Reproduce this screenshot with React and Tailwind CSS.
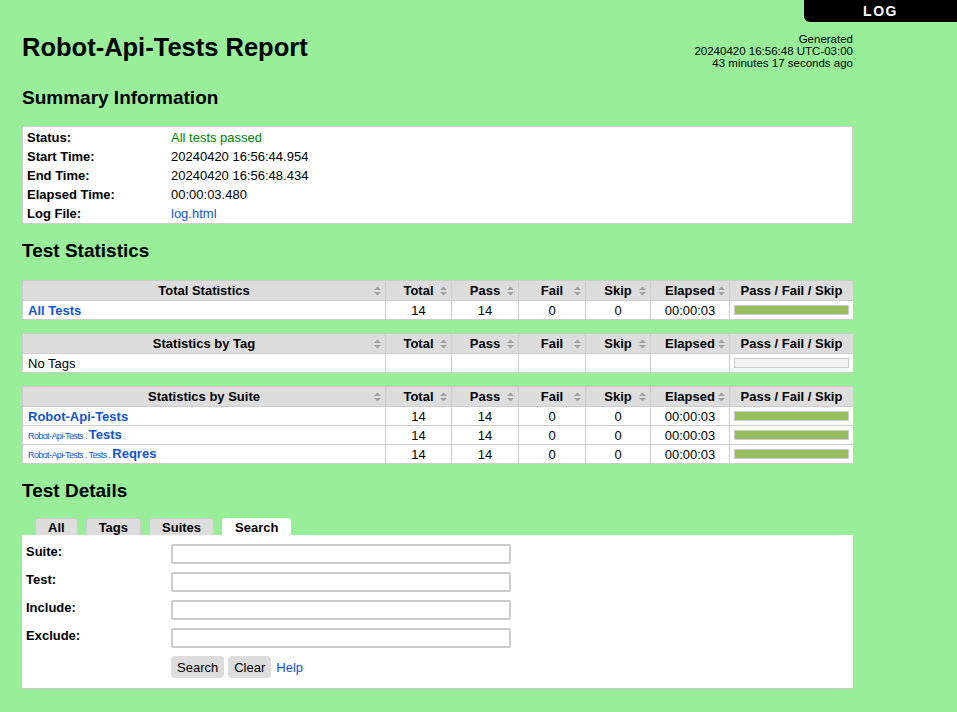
import React from "react";

const font = { fontFamily: '"Liberation Sans", Arial, Helvetica, sans-serif' };

function SortIcon() {
  return (
    <svg
      className="absolute right-[4px] top-1/2 -translate-y-1/2"
      width="7"
      height="9"
      viewBox="0 0 7 9"
    >
      <polygon points="0,3.5 3.5,0 7,3.5" fill="#a0a0a0" />
      <polygon points="0,5.5 3.5,9 7,5.5" fill="#a0a0a0" />
    </svg>
  );
}

const cols = ["Total", "Pass", "Fail", "Skip", "Elapsed"];

function Bar({ empty }) {
  return (
    <div className="px-[4px]">
      <div
        className={`h-[10px] border border-[#ccc] ${
          empty ? "bg-[#f4f4f4]" : "bg-[#97bd61]"
        }`}
      />
    </div>
  );
}

function StatTable({ title, rows }) {
  return (
    <table className="w-full table-fixed border-collapse bg-white text-[13px] leading-[15px]">
      <colgroup>
        <col className="w-[363px]" />
        <col className="w-[66px]" />
        <col className="w-[67px]" />
        <col className="w-[67px]" />
        <col className="w-[65px]" />
        <col className="w-[79px]" />
        <col className="w-[124px]" />
      </colgroup>
      <thead>
        <tr className="h-[20px] bg-[#ddd]">
          <th className="relative border border-[#ccc] p-0 font-bold">
            {title}
            <SortIcon />
          </th>
          {cols.map((c) => (
            <th key={c} className="relative border border-[#ccc] p-0 font-bold">
              {c}
              <SortIcon />
            </th>
          ))}
          <th className="border border-[#ccc] p-0 font-bold">Pass / Fail / Skip</th>
        </tr>
      </thead>
      <tbody>
        {rows.map((r, i) => (
          <tr key={i} className="h-[19px]">
            <td className="border border-[#ccc] p-0 pl-[5px] whitespace-nowrap overflow-hidden">
              {r.name}
            </td>
            {r.values.map((v, j) => (
              <td key={j} className="border border-[#ccc] p-0 text-center">
                {v}
              </td>
            ))}
            <td className="border border-[#ccc] p-0">
              <Bar empty={r.empty} />
            </td>
          </tr>
        ))}
      </tbody>
    </table>
  );
}

const passed = ["14", "14", "0", "0", "00:00:03"];

function Parent({ children }) {
  return (
    <span className="text-[9px] tracking-[-0.6px] font-normal">{children}</span>
  );
}

export default function App() {
  const summary = [
    ["Status:", <span className="text-[#008000]">All tests passed</span>],
    ["Start Time:", "20240420 16:56:44.954"],
    ["End Time:", "20240420 16:56:48.434"],
    ["Elapsed Time:", "00:00:03.480"],
    ["Log File:", <a className="text-[#15c]">log.html</a>],
  ];

  return (
    <div className="relative min-h-screen bg-[#99ee99] leading-[15px] text-black" style={font}>
      <div className="absolute right-0 top-0 flex h-[22px] w-[153px] items-center justify-center rounded-bl-[6px] bg-black text-[14px] font-bold tracking-[1.5px] text-white">
        LOG
      </div>

      <div className="ml-[22px] w-[831px] pt-[32px]">
        <div className="flex h-[30px] items-start justify-between">
          <h1 className="text-[25.5px] font-bold leading-[30px]">Robot-Api-Tests Report</h1>
          <div className="pt-[1px] text-right text-[11.5px] leading-[12px]">
            <div>Generated</div>
            <div>20240420 16:56:48 UTC-03:00</div>
            <div>43 minutes 17 seconds ago</div>
          </div>
        </div>

        <h2 className="mt-[25px] text-[19px] font-bold leading-[22px]">Summary Information</h2>
        <div className="mt-[17px] border border-[#ccc] bg-white pt-[1px] text-[13px]">
          {summary.map(([label, value]) => (
            <div key={label} className="flex h-[19px] items-center">
              <div className="w-[148px] pl-[4px] font-bold">{label}</div>
              <div>{value}</div>
            </div>
          ))}
        </div>

        <h2 className="mt-[16px] text-[19px] font-bold leading-[22px]">Test Statistics</h2>
        <div className="mt-[18px] flex flex-col gap-[13px]">
          <StatTable
            title="Total Statistics"
            rows={[
              {
                name: <a className="font-bold text-[#15c]">All Tests</a>,
                values: passed,
              },
            ]}
          />
          <StatTable
            title="Statistics by Tag"
            rows={[{ name: "No Tags", values: ["", "", "", "", ""], empty: true }]}
          />
          <StatTable
            title="Statistics by Suite"
            rows={[
              {
                name: <a className="font-bold text-[#15c]">Robot-Api-Tests</a>,
                values: passed,
              },
              {
                name: (
                  <a className="font-bold text-[#15c]">
                    <Parent>Robot-Api-Tests . </Parent>Tests
                  </a>
                ),
                values: passed,
              },
              {
                name: (
                  <a className="font-bold text-[#15c]">
                    <Parent>Robot-Api-Tests . Tests . </Parent>Reqres
                  </a>
                ),
                values: passed,
              },
            ]}
          />
        </div>

        <h2 className="mt-[16px] text-[19px] font-bold leading-[22px]">Test Details</h2>
        <div className="mt-[16px] flex items-end gap-2 pl-[13px] text-[13px] font-bold">
          {["All", "Tags", "Suites"].map((t) => (
            <div
              key={t}
              className="flex h-[17px] items-center rounded-t-[4px] border border-b-0 border-[#ccc] bg-[#ddd] px-3"
            >
              {t}
            </div>
          ))}
          <div className="flex h-[17px] items-center rounded-t-[4px] bg-white px-[13px] pt-[2px]">
            Search
          </div>
        </div>
        <div className="border-b border-[#ccc] bg-white pb-[10px] pt-[9px] text-[13px]">
          {["Suite:", "Test:", "Include:", "Exclude:"].map((l) => (
            <div key={l} className="mb-[8px] flex items-start">
              <div className="w-[149px] pl-[4px] font-bold leading-[15px]">{l}</div>
              <input
                type="text"
                className="h-[20px] w-[340px] rounded-[2px] border-2 border-[#ccc] bg-white outline-none"
              />
            </div>
          ))}
          <div className="flex items-center pl-[149px]">
            <button className="h-[22px] rounded-[4px] bg-[#ddd] px-[6px]">Search</button>
            <button className="ml-[4px] h-[22px] rounded-[4px] bg-[#ddd] px-[6px]">Clear</button>
            <a className="ml-[5px] text-[#15c]">Help</a>
          </div>
        </div>
      </div>
    </div>
  );
}
